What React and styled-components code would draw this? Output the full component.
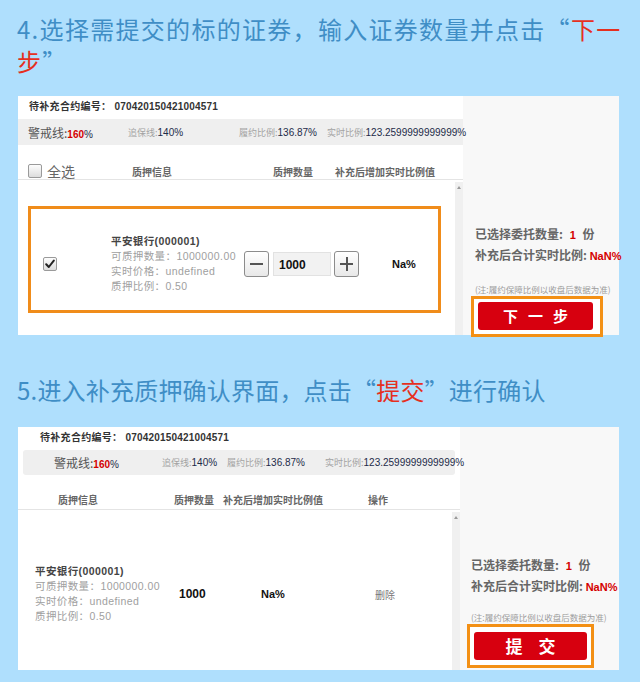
import React from 'react'
import styled, { createGlobalStyle } from 'styled-components'

const GlobalStyle = createGlobalStyle`
  body {
    margin: 0;
    background: #afdffd;
    font-family: "Liberation Sans", "Noto Sans CJK SC", sans-serif;
  }
`

const CJK = '"Noto Sans CJK SC", sans-serif'
const LATIN = '"Liberation Sans", "Noto Sans CJK SC", sans-serif'

const Page = styled.div`
  width: 640px;
  padding: 13px 0 12px;
`

const Heading = styled.h2`
  margin: ${p => p.$top || 0}px 0 ${p => p.$bottom || 0}px;
  padding: 0 0 0 17px;
  font-family: ${CJK};
  font-size: 24px;
  font-weight: 400;
  line-height: 32px;
  letter-spacing: ${p => p.$spacing}px;
  color: #3f8ec6;
`

const Hot = styled.span`
  color: #e5301f;
`

const Panel = styled.div`
  display: flex;
  width: 601px;
  height: ${p => p.$height}px;
  margin-left: 18px;
  background: #f8f8f8;
`

const Main = styled.div`
  display: flex;
  flex-direction: column;
  width: ${p => p.$width}px;
  background: #fff;
`

const ContractLine = styled.div`
  height: 20px;
  line-height: 20px;
  padding-left: ${p => p.$indent}px;
  font-size: 10px;
  font-weight: bold;
  color: #333;
  white-space: nowrap;
`

const ContractLabel = styled.span`
  font-family: ${CJK};
  letter-spacing: 0.3px;
  margin-right: 3px;
`

const ContractNo = styled.span`
  font-family: ${LATIN};
  letter-spacing: 0.2px;
`

const StatsBar = styled.div`
  display: grid;
  grid-template-columns: ${p => p.$cols};
  align-items: center;
  height: ${p => p.$h}px;
  margin: 3px ${p => p.$inset}px 0;
  padding-left: ${p => p.$pad}px;
  background: #efefef;
  border-radius: ${p => (p.$inset ? '3px' : '0')};
  white-space: nowrap;
`

const Stat = styled.span`
  font-size: 10px;
`

const StatLabel = styled.span`
  font-family: ${CJK};
  font-size: ${p => (p.$major ? '12px' : '9px')};
  color: ${p => (p.$major ? '#555' : '#a3a3a3')};
`

const StatValue = styled.span`
  font-family: ${LATIN};
  font-size: 10px;
  color: ${p => (p.$red ? '#d40000' : '#1d2b49')};
  font-weight: ${p => (p.$red ? 'bold' : 'normal')};
`

const TableHead = styled.div`
  display: grid;
  grid-template-columns: ${p => p.$cols};
  align-items: center;
  box-sizing: content-box;
  padding: ${p => p.$top}px 0 0 ${p => p.$pad}px;
  height: ${p => 34 - p.$top}px;
  border-bottom: 1px solid #e4e4e4;
  font-family: ${CJK};
  font-size: 10px;
  font-weight: bold;
  color: #666;
  white-space: nowrap;
`

const SelectAll = styled.label`
  display: flex;
  align-items: center;
  gap: 5px;
  font-family: ${CJK};
  font-size: 14px;
  font-weight: normal;
  color: #666;
`

const Check = styled.span`
  display: inline-flex;
  align-items: center;
  justify-content: center;
  width: 14px;
  height: 14px;
  box-sizing: border-box;
  border: 1px solid #9a9a9a;
  border-radius: 2px;
  background: linear-gradient(#fdfdfd, #dcdcdc);
`

const Body = styled.div`
  display: flex;
  flex: 1;
`

const BodyContent = styled.div`
  flex: 1;
`

const Rail = styled.div`
  position: relative;
  width: 8px;
  margin-top: 2px;
  background: #f0f0f0;

  &::before {
    content: '';
    position: absolute;
    top: 4px;
    left: 2px;
    border-left: 2px solid transparent;
    border-right: 2px solid transparent;
    border-bottom: 3px solid #9a9a9a;
  }
`

const Highlight = styled.div`
  width: 413px;
  height: 107px;
  box-sizing: border-box;
  margin: 26px 0 0 10px;
  padding-top: 9px;
  border: 3px solid #f08c1a;
  display: flex;
`

const Row = styled.div`
  display: grid;
  grid-template-columns: ${p => p.$cols};
  align-items: center;
  padding: ${p => p.$top || 0}px 0 0 ${p => p.$pad}px;
  height: ${p => p.$height || 'auto'};
  box-sizing: border-box;
  flex: 1;
`

const Security = styled.div`
  font-size: 10.5px;
  line-height: ${p => p.$lh}px;
  color: #a0a0a0;
  letter-spacing: 0.4px;
  white-space: nowrap;
`

const SecurityName = styled.div`
  font-weight: bold;
  color: #444;
`

const Stepper = styled.div`
  display: flex;
  align-items: center;
  gap: 3px;
`

const StepBtn = styled.span`
  position: relative;
  width: 25px;
  height: 26px;
  box-sizing: border-box;
  border: 1px solid #8c8c8c;
  border-radius: 3px;
  background: linear-gradient(#ffffff, #e8e8e8);

  &::before {
    content: '';
    position: absolute;
    left: 5px;
    right: 5px;
    top: 11px;
    height: 2px;
    background: #555;
  }
  &::after {
    content: '';
    display: ${p => (p.$plus ? 'block' : 'none')};
    position: absolute;
    top: 5px;
    bottom: 5px;
    left: 11px;
    width: 2px;
    background: #555;
  }
`

const Qty = styled.span`
  width: 58px;
  height: 24px;
  line-height: 24px;
  box-sizing: border-box;
  padding-left: 5px;
  margin-left: 1px;
  border: 1px solid #e2e2e2;
  background: #f2f2f2;
  font-size: 12px;
  font-weight: bold;
  color: #111;
`

const Cell = styled.span`
  font-family: ${p => (p.$cjk ? CJK : LATIN)};
  font-size: ${p => p.$size || 11}px;
  font-weight: ${p => (p.$plain ? 'normal' : 'bold')};
  color: ${p => p.$color || '#111'};
`

const Side = styled.div`
  flex: 1;
  padding-top: ${p => p.$top}px;
`

const Summary = styled.div`
  padding-left: ${p => p.$pad}px;
  font-family: ${CJK};
  font-size: 12px;
  font-weight: bold;
  line-height: 19px;
  color: #666;
  white-space: nowrap;
`

const Red = styled.span`
  font-family: ${LATIN};
  font-size: 11px;
  color: #d40000;
  margin: 0 ${p => p.$gap || 0}px;
`

const Note = styled.div`
  margin-top: ${p => p.$mt}px;
  padding-left: ${p => p.$pad}px;
  font-family: ${CJK};
  font-size: 8.5px;
  line-height: 14px;
  color: #9c9c9c;
  white-space: nowrap;
`

const ButtonFrame = styled.div`
  width: ${p => p.$w}px;
  height: ${p => p.$h}px;
  box-sizing: border-box;
  margin-left: ${p => p.$ml}px;
  padding: ${p => p.$pad};
  border: 3px solid #f39015;
  background: #fff;
`

const RedButton = styled.div`
  width: ${p => p.$w}px;
  height: 28px;
  line-height: 28px;
  border-radius: 3px;
  background: #d7000f;
  color: #fff;
  text-align: center;
  font-family: ${CJK};
  font-size: ${p => p.$size}px;
  font-weight: bold;
  letter-spacing: ${p => p.$spacing}px;
  text-indent: ${p => p.$spacing}px;
`

const CheckMark = () => (
  <svg width='10' height='10' viewBox='0 0 10 10'>
    <path d='M1.2 5.2 L3.8 8 L8.8 1.6' fill='none' stroke='#222' strokeWidth='2' strokeLinecap='round' strokeLinejoin='round' />
  </svg>
)

const SecurityInfo = ({ lh }) => (
  <Security $lh={lh}>
    <SecurityName>平安银行(000001)</SecurityName>
    <div>可质押数量：1000000.00</div>
    <div>实时价格：undefined</div>
    <div>质押比例：0.50</div>
  </Security>
)

const Stats = ({ cols, pad, inset, h }) => (
  <StatsBar $cols={cols} $pad={pad} $inset={inset} $h={h}>
    <Stat><StatLabel $major>警戒线:</StatLabel><StatValue $red>160</StatValue><StatValue>%</StatValue></Stat>
    <Stat><StatLabel>追保线:</StatLabel><StatValue>140%</StatValue></Stat>
    <Stat><StatLabel>履约比例:</StatLabel><StatValue>136.87%</StatValue></Stat>
    <Stat><StatLabel>实时比例:</StatLabel><StatValue>123.2599999999999%</StatValue></Stat>
  </StatsBar>
)

const SideSummary = ({ pad }) => (
  <>
    <Summary $pad={pad}>已选择委托数量: <Red $gap={4}>1</Red> 份</Summary>
    <Summary $pad={pad}>补充后合计实时比例: <Red>NaN%</Red></Summary>
  </>
)

const NOTE = '(注:履约保障比例以收盘后数据为准)'

export default function App () {
  return (
    <Page>
      <GlobalStyle />
      <Heading $bottom={19} $spacing={1.3}>
        4.选择需提交的标的证券，输入证券数量并点击“<Hot>下一</Hot><Hot>步</Hot>”
      </Heading>

      <Panel $height={239}>
        <Main $width={445}>
          <ContractLine $indent={11}>
            <ContractLabel>待补充合约编号：</ContractLabel>
            <ContractNo>070420150421004571</ContractNo>
          </ContractLine>
          <Stats cols='100px 111px 88px auto' pad={10} inset={0} h={26} />
          <TableHead $cols='104px 141px 62px auto' $pad={10} $top={16}>
            <SelectAll><Check />全选</SelectAll>
            <span>质押信息</span>
            <span>质押数量</span>
            <span>补充后增加实时比例值</span>
          </TableHead>
          <Body>
            <BodyContent>
              <Highlight>
                <Row $cols='68px 133px 148px auto' $pad={12}>
                  <Check><CheckMark /></Check>
                  <SecurityInfo lh={15} />
                  <Stepper>
                    <StepBtn />
                    <Qty>1000</Qty>
                    <StepBtn $plus />
                  </Stepper>
                  <Cell>Na%</Cell>
                </Row>
              </Highlight>
            </BodyContent>
            <Rail />
          </Body>
        </Main>
        <Side $top={128}>
          <SideSummary pad={12} />
          <Note $mt={16} $pad={12}>{NOTE}</Note>
          <ButtonFrame $w={132} $h={41} $ml={8} $pad='3px 7px 4px 4px'>
            <RedButton $w={115} $size={15} $spacing={10}>下一步</RedButton>
          </ButtonFrame>
        </Side>
      </Panel>

      <Heading $top={39} $bottom={21} $spacing={0.2}>
        5.进入补充质押确认界面，点击“<Hot>提交</Hot>”进行确认
      </Heading>

      <Panel $height={243}>
        <Main $width={442}>
          <ContractLine $indent={22}>
            <ContractLabel>待补充合约编号：</ContractLabel>
            <ContractNo>070420150421004571</ContractNo>
          </ContractLine>
          <Stats cols='108px 65px 98px auto' pad={31} inset={5} h={25} />
          <TableHead $cols='116px 49px 145px auto' $pad={40} $top={14}>
            <span>质押信息</span>
            <span>质押数量</span>
            <span>补充后增加实时比例值</span>
            <span>操作</span>
          </TableHead>
          <Body>
            <BodyContent>
              <Row $cols='144px 82px 114px auto' $pad={17} $top={8} $height='100%'>
                <SecurityInfo lh={15} />
                <Cell $size={12}>1000</Cell>
                <Cell>Na%</Cell>
                <Cell $cjk $plain $size={10} $color='#777'>删除</Cell>
              </Row>
            </BodyContent>
            <Rail />
          </Body>
        </Main>
        <Side $top={128}>
          <SideSummary pad={11} />
          <Note $mt={13} $pad={11}>{NOTE}</Note>
          <ButtonFrame $w={127} $h={44} $ml={7} $pad='5px 4px'>
            <RedButton $w={113} $size={17} $spacing={16}>提交</RedButton>
          </ButtonFrame>
        </Side>
      </Panel>
    </Page>
  )
}
